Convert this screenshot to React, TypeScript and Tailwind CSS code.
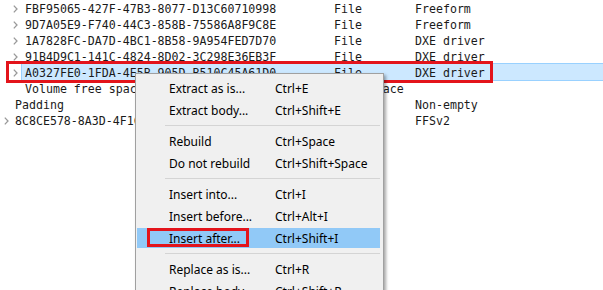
import { Fragment } from "react";

type Row = {
    name: string;
    type: string;
    subtype: string;
    child: boolean;
    arrow: boolean;
    selected?: boolean;
};

const rows: Row[] = [
    { name: "FBF95065-427F-47B3-8077-D13C60710998", type: "File", subtype: "Freeform", child: true, arrow: true },
    { name: "9D7A05E9-F740-44C3-858B-75586A8F9C8E", type: "File", subtype: "Freeform", child: true, arrow: true },
    { name: "1A7828FC-DA7D-4BC1-8B58-9A954FED7D70", type: "File", subtype: "DXE driver", child: true, arrow: true },
    { name: "91B4D9C1-141C-4824-8D02-3C298E36EB3F", type: "File", subtype: "DXE driver", child: true, arrow: true },
    { name: "A0327FE0-1FDA-4E5B-905D-B510C45A61D0", type: "File", subtype: "DXE driver", child: true, arrow: true, selected: true },
    { name: "Volume free space", type: "Free space", subtype: "", child: true, arrow: false },
    { name: "Padding", type: "Padding", subtype: "Non-empty", child: false, arrow: false },
    { name: "8C8CE578-8A3D-4F1C-9935-896185C32DD3", type: "Volume", subtype: "FFSv2", child: false, arrow: true },
];

type MenuEntry = { label: string; shortcut: string; active?: boolean } | "sep";

const menu: MenuEntry[] = [
    { label: "Extract as is...", shortcut: "Ctrl+E" },
    { label: "Extract body...", shortcut: "Ctrl+Shift+E" },
    "sep",
    { label: "Rebuild", shortcut: "Ctrl+Space" },
    { label: "Do not rebuild", shortcut: "Ctrl+Shift+Space" },
    "sep",
    { label: "Insert into...", shortcut: "Ctrl+I" },
    { label: "Insert before...", shortcut: "Ctrl+Alt+I" },
    { label: "Insert after...", shortcut: "Ctrl+Shift+I", active: true },
    "sep",
    { label: "Replace as is...", shortcut: "Ctrl+R" },
    { label: "Replace body...", shortcut: "Ctrl+Shift+R" },
];

function Chevron() {
    return (
        <svg width="5" height="8" viewBox="0 0 5 8" className="block">
            <path d="M0.8 0.6 L4 4 L0.8 7.4" fill="none" stroke="#999" strokeWidth="1.3" />
        </svg>
    );
}

function TreeRow({ row }: { row: Row }) {
    return (
        <div className="flex h-4 items-center">
            <div className={row.child ? "flex h-4 w-[22px] shrink-0 items-center pl-[13px] pt-px" : "flex h-4 w-[12px] shrink-0 items-center pl-[4px] pt-px"}>
                {row.arrow && <Chevron />}
            </div>
            <div
                className={
                    row.selected
                        ? "flex h-4 flex-1 items-center bg-[#cce8ff] pl-[3px] pt-[3px] shadow-[0_0_0_1px_#99d1ff]"
                        : "flex h-4 flex-1 items-center pl-[3px] pt-[3px]"
                }
            >
                <span className={row.child ? "w-[309px] shrink-0 whitespace-nowrap" : "w-[319px] shrink-0 whitespace-nowrap"}>{row.name}</span>
                <span className="w-[81px] shrink-0 whitespace-nowrap">{row.type}</span>
                <span className="whitespace-nowrap">{row.subtype}</span>
            </div>
        </div>
    );
}

function ContextMenu() {
    return (
        <div className="absolute left-[135px] top-[73px] w-[249px] border border-[#a0a0a0] bg-[#f0f0f0] pb-1 pl-px pr-[3px] pt-[3px] font-['Noto_Sans',sans-serif] text-[12px] text-black shadow-[2px_2px_3px_rgba(0,0,0,0.35)]">
            {menu.map((entry, i) =>
                entry === "sep" ? (
                    <div key={i} className="flex h-[9px] items-center pl-[28px]">
                        <div className="h-px w-full bg-[#d4d4d4]" />
                    </div>
                ) : (
                    <Fragment key={i}>
                        <div className="h-[22px] py-px">
                            <div className={entry.active ? "relative flex h-full items-center bg-[#91c9f7] pl-[32px] pt-px" : "relative flex h-full items-center pl-[32px] pt-px"}>
                                <span className="w-[106px] shrink-0 whitespace-nowrap">{entry.label}</span>
                                <span className="whitespace-nowrap">{entry.shortcut}</span>
                                {entry.active && <div className="absolute left-[10px] top-0 h-[19px] w-[102px] border-[3px] border-[#e3141b]" />}
                            </div>
                        </div>
                    </Fragment>
                )
            )}
        </div>
    );
}

export default function App() {
    return (
        <div className="relative h-[290px] w-[603px] overflow-hidden bg-white font-['DejaVu_Sans_Mono',monospace] text-[11.6px] text-[#1a1a1a]">
            <div className="flex flex-col">
                {rows.map((row) => (
                    <TreeRow key={row.name} row={row} />
                ))}
            </div>
            <div className="absolute left-[6px] top-[61px] h-[22px] w-[487px] border-[3px] border-[#e3141b]" />
            <ContextMenu />
        </div>
    );
}
